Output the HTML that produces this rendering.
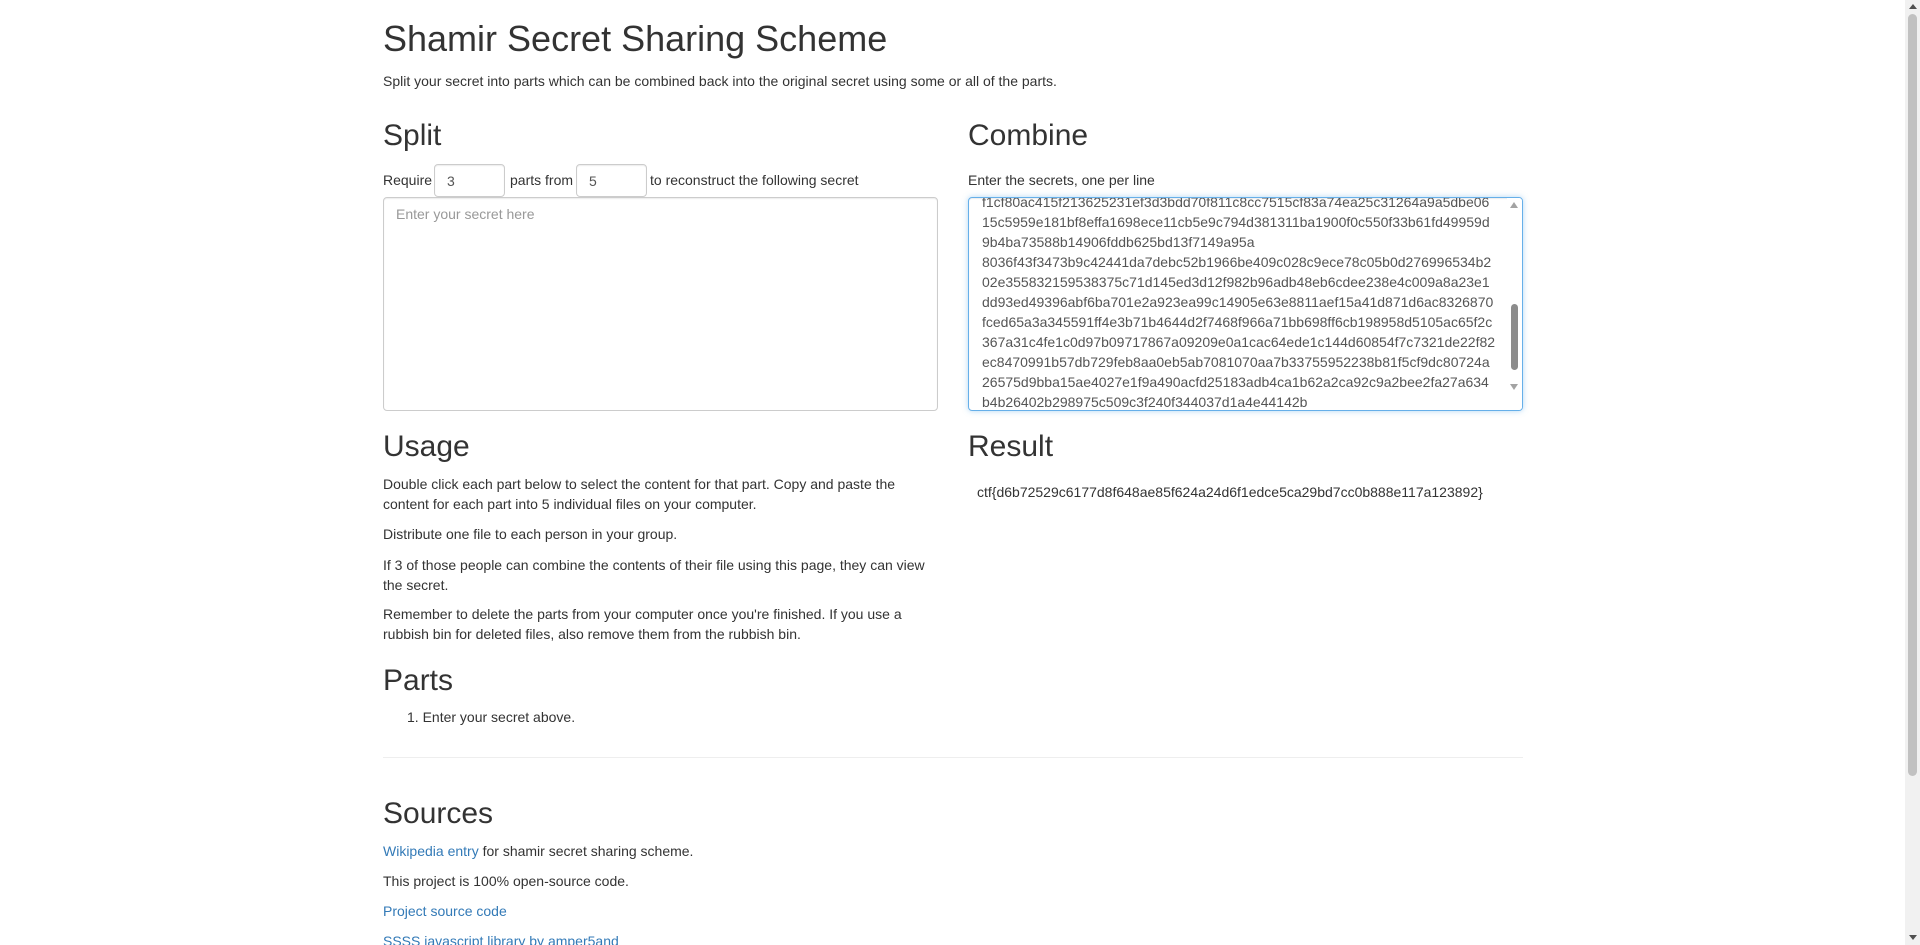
<!DOCTYPE html>
<html><head><meta charset="utf-8"><style>
*{box-sizing:border-box}
html,body{margin:0;padding:0;width:1920px;height:945px;overflow:hidden;background:#fff}
body{font-family:"Liberation Sans",Arial,sans-serif;font-size:14px;line-height:20px;color:#333;position:relative}
.a{position:absolute;white-space:nowrap}
h1,h2{margin:0;font-weight:500;font-family:"Liberation Sans",Arial,sans-serif}
h1{font-size:36px}
h2{font-size:30px}
p{margin:0}
a{color:#337ab7;text-decoration:none}
.inp{position:absolute;border:1px solid #ccc;border-radius:4px;box-shadow:inset 0 1px 1px rgba(0,0,0,.075);padding:6px 12px;color:#555}
.ta{position:absolute;border:1px solid #ccc;border-radius:4px;box-shadow:inset 0 1px 1px rgba(0,0,0,.075)}
.sb{position:absolute;right:0;top:0;width:15px;height:945px;background:#f1f1f1}
</style></head><body>
<h1 class="a" style="left:383px;top:18px;line-height:42px">Shamir Secret Sharing Scheme</h1>
<p class="a" style="left:383px;top:71px">Split your secret into parts which can be combined back into the original secret using some or all of the parts.</p>

<h2 class="a" style="left:383px;top:118px;line-height:36px">Split</h2>
<span class="a" style="left:383px;top:170px">Require</span>
<div class="inp" style="left:434px;top:164px;width:71px;height:33px">3</div>
<span class="a" style="left:510px;top:170px">parts from</span>
<div class="inp" style="left:576px;top:164px;width:71px;height:33px">5</div>
<span class="a" style="left:650px;top:170px">to reconstruct the following secret</span>
<div class="ta" style="left:383px;top:197px;width:555px;height:214px;padding:6px 12px;color:#999">Enter your secret here</div>

<h2 class="a" style="left:968px;top:118px;line-height:36px">Combine</h2>
<span class="a" style="left:968px;top:170px">Enter the secrets, one per line</span>
<div class="ta" style="left:968px;top:197px;width:555px;height:214px;border-color:#66afe9;box-shadow:inset 0 1px 1px rgba(0,0,0,.075),0 0 6px rgba(102,175,233,.5);overflow:hidden;color:#555">
<div style="position:absolute;left:13px;top:-6px;white-space:pre;line-height:20px">f1cf80ac415f213625231ef3d3bdd70f811c8cc7515cf83a74ea25c31264a9a5dbe06
15c5959e181bf8effa1698ece11cb5e9c794d381311ba1900f0c550f33b61fd49959d
9b4ba73588b14906fddb625bd13f7149a95a
8036f43f3473b9c42441da7debc52b1966be409c028c9ece78c05b0d276996534b2
02e355832159538375c71d145ed3d12f982b96adb48eb6cdee238e4c009a8a23e1
dd93ed49396abf6ba701e2a923ea99c14905e63e8811aef15a41d871d6ac8326870
fced65a3a345591ff4e3b71b4644d2f7468f966a71bb698ff6cb198958d5105ac65f2c
367a31c4fe1c0d97b09717867a09209e0a1cac64ede1c144d60854f7c7321de22f82
ec8470991b57db729feb8aa0eb5ab7081070aa7b33755952238b81f5cf9dc80724a
26575d9bba15ae4027e1f9a490acfd25183adb4ca1b62a2ca92c9a2bee2fa27a634
b4b26402b298975c509c3f240f344037d1a4e44142b</div>
<div style="position:absolute;right:0;top:0;width:15px;height:100%;background:#fff">
<div style="position:absolute;left:3px;top:4px;width:0;height:0;border-left:4px solid transparent;border-right:4px solid transparent;border-bottom:6px solid #a3a3a3"></div>
<div style="position:absolute;left:4px;top:106px;width:7px;height:66px;background:#8c8c8c;border-radius:4px"></div>
<div style="position:absolute;left:3px;top:186px;width:0;height:0;border-left:4px solid transparent;border-right:4px solid transparent;border-top:6px solid #a3a3a3"></div>
</div>
</div>

<h2 class="a" style="left:383px;top:429px;line-height:36px">Usage</h2>
<p class="a" style="left:383px;top:474px">Double click each part below to select the content for that part. Copy and paste the</p>
<p class="a" style="left:383px;top:494px">content for each part into 5 individual files on your computer.</p>
<p class="a" style="left:383px;top:524px">Distribute one file to each person in your group.</p>
<p class="a" style="left:383px;top:555px">If 3 of those people can combine the contents of their file using this page, they can view</p>
<p class="a" style="left:383px;top:575px">the secret.</p>
<p class="a" style="left:383px;top:604px">Remember to delete the parts from your computer once you're finished. If you use a</p>
<p class="a" style="left:383px;top:624px">rubbish bin for deleted files, also remove them from the rubbish bin.</p>

<h2 class="a" style="left:968px;top:429px;line-height:36px">Result</h2>
<p class="a" style="left:977px;top:482px">ctf{d6b72529c6177d8f648ae85f624a24d6f1edce5ca29bd7cc0b888e117a123892}</p>

<h2 class="a" style="left:383px;top:663px;line-height:36px">Parts</h2>
<p class="a" style="left:407px;top:707px">1.&nbsp;Enter your secret above.</p>
<div class="a" style="left:383px;top:757px;width:1140px;border-top:1px solid #eee"></div>

<h2 class="a" style="left:383px;top:796px;line-height:36px">Sources</h2>
<p class="a" style="left:383px;top:841px"><a>Wikipedia entry</a> for shamir secret sharing scheme.</p>
<p class="a" style="left:383px;top:871px">This project is 100% open-source code.</p>
<p class="a" style="left:383px;top:901px"><a>Project source code</a></p>
<p class="a" style="left:383px;top:931px"><a>SSSS javascript library by amper5and</a></p>

<div class="sb">
<div style="position:absolute;left:4px;top:4px;width:0;height:0;border-left:4px solid transparent;border-right:4px solid transparent;border-bottom:5px solid #505050"></div>
<div style="position:absolute;left:3px;top:14px;width:9px;height:762px;background:#c1c1c1;border-radius:5px"></div>
<div style="position:absolute;left:4px;top:935px;width:0;height:0;border-left:4px solid transparent;border-right:4px solid transparent;border-top:5px solid #505050"></div>
</div>
</body></html>
